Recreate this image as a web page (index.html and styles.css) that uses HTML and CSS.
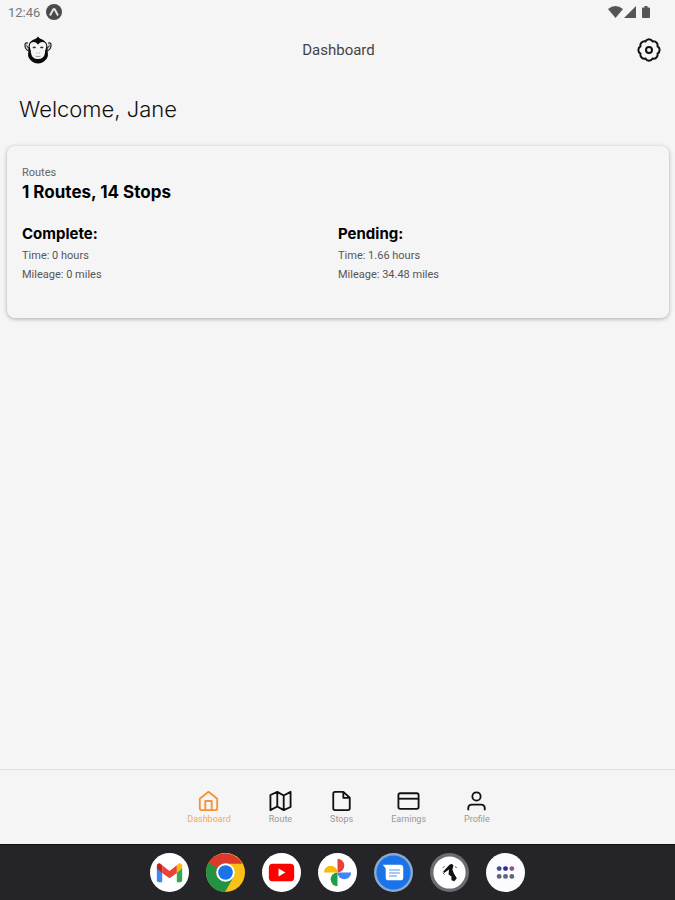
FILE: index.html
```html
<!doctype html>
<html lang="en">
  <head>
    <meta charset="UTF-8" />
    <meta name="viewport" content="width=device-width, initial-scale=1.0" />
    <title>Dashboard</title>
    <link rel="stylesheet" href="styles.css">
  </head>
  <body>
    <div class="status-bar">
      <span class="time">12:46</span>
      <svg class="status-app" viewBox="0 0 16 16" aria-hidden="true">
        <circle cx="8" cy="8" r="8" fill="#4a4a4a" />
        <path d="M4 11.500 7.200 5.500q.8-1.200 1.600 0l3.200 6" fill="none" stroke="#e4e4e4" stroke-width="2" />
      </svg>
      <div class="status-icons">
        <svg width="15" height="12" viewBox="0 0 15 12" aria-hidden="true"><path d="M0 3Q7.500-3 15 3L7.500 12z" /></svg>
        <svg width="12" height="12" viewBox="0 0 12 12" aria-hidden="true"><path d="M12 0v12H0z" /></svg>
        <svg class="battery" width="8" height="12" viewBox="0 0 8 12" aria-hidden="true"><path d="M2.500 0h3v1.500H7q1 0 1 1V11q0 1-1 1H1q-1 0-1-1V2.500q0-1 1-1h1.500z" /></svg>
      </div>
    </div>

    <header class="header">
      <svg class="logo" viewBox="0 0 28 28" role="img" aria-label="Monkey logo">
        <path d="M4 7Q.5 6 1 10q.5 4 4 5M24 7q3.500-1 3 3-.5 4-4 5" fill="#d0d0d0" stroke="#222" stroke-width="1.200" />
        <path d="M2.500 9.500 4.500 12M25.500 9.500 23.500 12" stroke="#222" />
        <path d="M14 .5q1 1.500 3 2.500 5 2 6 5.500 1 3 .5 6.500 1.500 5-1.500 8.500-3.500 4-8 4t-8-4Q3 20 4.500 15 4 11.500 5 8q1-3 6-5 2-1 3-2.500z" fill="#0b0b0b" />
        <path d="M14 8.500Q11 5 7.500 6.500q-2.500 2-1.500 5.500 1 2.500 1 5 1 6 7 6t7-6q0-2.500 1-5 1-3.500-1.500-5.500-3.500-1.500-6.500 2z" fill="#f5f5f5" />
        <path d="M9 12q1.200-1.500 2.500 0M16.500 12q1.300-1.500 2.500 0" fill="none" stroke="#333" stroke-width="1.500" />
        <path d="M12.500 17h1M14.800 17h1M11.500 20.200q2.500 1 5 0" fill="none" stroke="#999" />
      </svg>
      <h1 class="title">Dashboard</h1>
      <button class="settings" aria-label="Settings">
        <svg viewBox="0 0 24 24" aria-hidden="true">
          <circle cx="12" cy="12" r="3" />
          <path d="M8.400 3.400a4.200 4.200 0 0 1 7.200 0a4.200 4.200 0 0 1 5 5a4.200 4.200 0 0 1 0 7.200a4.200 4.200 0 0 1-5 5a4.200 4.200 0 0 1-7.200 0a4.200 4.200 0 0 1-5-5a4.200 4.200 0 0 1 0-7.200a4.200 4.200 0 0 1 5-5z" />
        </svg>
      </button>
    </header>

    <main class="content">
      <h2 class="welcome">Welcome, Jane</h2>

      <section class="card">
        <p class="card-label">Routes</p>
        <h3 class="card-title">1 Routes, 14 Stops</h3>
        <div class="stats">
          <div>
            <h4>Complete:</h4>
            <p>Time: 0 hours</p>
            <p>Mileage: 0 miles</p>
          </div>
          <div>
            <h4>Pending:</h4>
            <p>Time: 1.66 hours</p>
            <p>Mileage: 34.48 miles</p>
          </div>
        </div>
      </section>
    </main>

    <nav class="tabs">
      <a class="tab active" href="#dashboard">
        <svg viewBox="0 0 24 24" aria-hidden="true"><path d="M2.500 9.500 12 2l9.500 7.500V20q0 2-2 2h-15q-2 0-2-2zM8.500 22V12h7v10" /></svg>
        Dashboard
      </a>
      <a class="tab" href="#route">
        <svg viewBox="0 0 24 24" aria-hidden="true"><path d="M1 5.500 8.500 2l7 4L23 2v16.500L15.500 22l-7-4L1 22zM8.500 2v16M15.500 6v16" /></svg>
        Route
      </a>
      <a class="tab" href="#stops">
        <svg viewBox="0 0 24 24" aria-hidden="true"><path d="M14 2H5q-2 0-2 2v16q0 2 2 2h14q2 0 2-2V8.500zM14 2v6.500h7" /></svg>
        Stops
      </a>
      <a class="tab" href="#earnings">
        <svg viewBox="0 0 24 24" aria-hidden="true"><rect x="1" y="3.500" width="22" height="17" rx="2" /><path d="M1 9.500h22" /></svg>
        Earnings
      </a>
      <a class="tab" href="#profile">
        <svg viewBox="0 0 24 24" aria-hidden="true"><circle cx="12" cy="7" r="4.500" /><path d="M3 22v-2q0-4 4-4h10q4 0 4 4v2" /></svg>
        Profile
      </a>
    </nav>

    <div class="dock">
      <button class="app" aria-label="Gmail">
        <svg viewBox="0 0 40 40" aria-hidden="true">
          <circle cx="20" cy="20" r="20" fill="#fff" />
          <path d="M7 15v13q0 2 2 2h3.500V17.500z" fill="#4285f4" />
          <path d="M27.500 17.500V30H31q2 0 2-2V15z" fill="#34a853" />
          <path d="M27.500 12.500v8L33 16v-3q0-3-3-2.500z" fill="#fbbc04" />
          <path d="M7 13v3l5.500 4.500v-8L10 10.500Q7 10 7 13z" fill="#c5221f" />
          <path d="M12.500 12.500v8L20 26l7.500-5.500v-8L20 18.500z" fill="#ea4335" />
        </svg>
      </button>
      <button class="app" aria-label="Chrome">
        <svg viewBox="0 0 40 40" aria-hidden="true">
          <circle cx="20" cy="20" r="20" fill="#fbc116" />
          <path d="M20 20 2.700 10A20 20 0 0 1 37.300 11H20z" fill="#db3a2c" />
          <path d="M2.700 10A20 20 0 0 0 19.500 40L28 25l-8 4-8-4z" fill="#229342" />
          <path d="M2.700 10 11 24l9-4V11z" fill="#db3a2c" />
          <path d="M2.700 10 12 25l3-3-5-8z" fill="#229342" />
          <circle cx="20" cy="20" r="9.500" fill="#fff" />
          <circle cx="20" cy="20" r="7.500" fill="#1a73e8" />
        </svg>
      </button>
      <button class="app" aria-label="YouTube">
        <svg viewBox="0 0 40 40" aria-hidden="true">
          <circle cx="20" cy="20" r="20" fill="#fff" />
          <rect x="7" y="11" width="26" height="18" rx="4" fill="#f00" />
          <path d="M17 16v8l7-4z" fill="#fff" />
        </svg>
      </button>
      <button class="app" aria-label="Photos">
        <svg viewBox="0 0 40 40" aria-hidden="true">
          <circle cx="20" cy="20" r="20" fill="#fff" />
          <path d="M20 6a7 7 0 0 1 0 14z" fill="#ea4335" />
          <path d="M34 20a7 7 0 0 1-14 0z" fill="#4285f4" />
          <path d="M20 34a7 7 0 0 1 0-14z" fill="#1e9e4a" />
          <path d="M6 20a7 7 0 0 1 14 0z" fill="#fbbc04" />
        </svg>
      </button>
      <button class="app" aria-label="Messages">
        <svg viewBox="0 0 40 40" aria-hidden="true">
          <circle cx="20" cy="20" r="20" fill="#8aa9cc" />
          <circle cx="20" cy="20" r="17.500" fill="#1a73e8" />
          <path d="M9 12h18q3 0 3 3v10q0 3-3 3H15q-3 0-3-3v-9z" fill="#fff" />
          <path d="M15.500 17.500h11M15.500 20.500h11M15.500 23.500h8" stroke="#8bb5f3" stroke-width="1.500" />
        </svg>
      </button>
      <button class="app" aria-label="Driver app">
        <svg viewBox="0 0 40 40" aria-hidden="true">
          <circle cx="20" cy="20" r="20" fill="#6c6b70" />
          <circle cx="20" cy="20" r="16.500" fill="#fff" />
          <path d="M20 12q3-2 4 1l-1 4 1.500 4 3 5-2.500 3-3-1 0-4-3-2 .5-5-5 3.500-1-1.500z" fill="#111" />
          <path d="M13 20l2 2M25.500 14l2 1M13 15l2-1" stroke="#555" />
        </svg>
      </button>
      <button class="app" aria-label="All apps">
        <svg viewBox="0 0 40 40" aria-hidden="true">
          <circle cx="20" cy="20" r="20" fill="#fbfaff" />
          <g fill="#5b6478">
            <circle cx="13.500" cy="16" r="2.500" fill="#3f4b8c" />
            <circle cx="20" cy="16" r="2.500" fill="#2b2a9a" />
            <circle cx="26.500" cy="16" r="2.500" fill="#8b5b78" />
            <circle cx="13.500" cy="24" r="2.500" />
            <circle cx="20" cy="24" r="2.500" />
            <circle cx="26.500" cy="24" r="2.500" />
          </g>
        </svg>
      </button>
    </div>
  </body>
</html>
```
FILE: styles.css
```css
* {
  box-sizing: border-box;
}
body {
  margin: 0;
  min-height: 100vh;
  display: flex;
  flex-direction: column;
  background: #f5f5f5;
  color: #111;
  font-family: Roboto, sans-serif;
}
h1,
h2,
h3,
h4,
p {
  margin: 0;
}
svg {
  display: block;
}
button {
  padding: 0;
  border: none;
  background: none;
  cursor: pointer;
}

/* Status bar */
.status-bar {
  display: flex;
  align-items: center;
  height: 24px;
  padding: 0 25px 0 8px;
  color: #777;
}
.time {
  font-size: 13px;
}
.status-app {
  width: 16px;
  height: 16px;
  margin-left: 6px;
}
.status-icons {
  display: flex;
  gap: 1px;
  margin-left: auto;
  fill: #555;
}
.battery {
  margin-left: 5px;
}

/* Header */
.header {
  display: grid;
  grid-template-columns: 1fr auto 1fr;
  align-items: center;
  height: 52px;
  padding: 0 14px 0 24px;
}
.logo {
  width: 28px;
  height: 28px;
}
.title {
  padding-right: 8px;
  font-size: 15px;
  font-weight: 400;
  color: #444;
}
.settings {
  justify-self: end;
}
.settings svg {
  width: 24px;
  height: 24px;
  fill: none;
  stroke: #111;
  stroke-width: 2;
}

/* Content */
.content {
  flex: 1;
  padding: 16px 6px 16px 7px;
}
.welcome {
  padding: 0 12px;
  font-family: Inter, sans-serif;
  font-size: 22px;
  font-weight: 300;
  line-height: 34px;
}
.card {
  margin-top: 20px;
  padding: 20px 15px 34px;
  border-radius: 8px;
  background: #f5f5f5;
  box-shadow: 0 1px 4px rgba(0, 0, 0, 0.3);
}
.card-label {
  font-size: 11px;
  line-height: 14px;
  color: #666;
}
.card-title {
  font-family: Inter, sans-serif;
  font-size: 17px;
  font-weight: 700;
  line-height: 24px;
  color: #000;
}
.stats {
  display: grid;
  grid-template-columns: 1fr 1fr;
  margin-top: 18px;
}
.stats h4 {
  font-family: Inter, sans-serif;
  font-size: 15px;
  font-weight: 700;
  line-height: 24px;
  color: #000;
}
.stats p {
  font-size: 11px;
  line-height: 19px;
  color: #555;
}

/* Bottom tabs */
.tabs {
  display: flex;
  justify-content: center;
  gap: 38px;
  height: 75px;
  padding-top: 20px;
  padding-left: 2px;
  border-top: 1px solid #dedede;
}
.tab {
  display: flex;
  flex-direction: column;
  align-items: center;
  gap: 1px;
  font-size: 9px;
  line-height: 12px;
  color: #999;
  text-decoration: none;
}
.tab svg {
  width: 23px;
  height: 22px;
  fill: none;
  stroke: #111;
  stroke-width: 2;
  stroke-linejoin: round;
}
.tab.active {
  color: #f7a862;
}
.tab.active svg {
  stroke: #f59331;
}

/* Android dock */
.dock {
  display: flex;
  align-items: center;
  justify-content: center;
  gap: 17px;
  height: 56px;
  border-top: 1px solid #111;
  background: #252529;
}
.app svg {
  width: 39px;
  height: 39px;
}
```
